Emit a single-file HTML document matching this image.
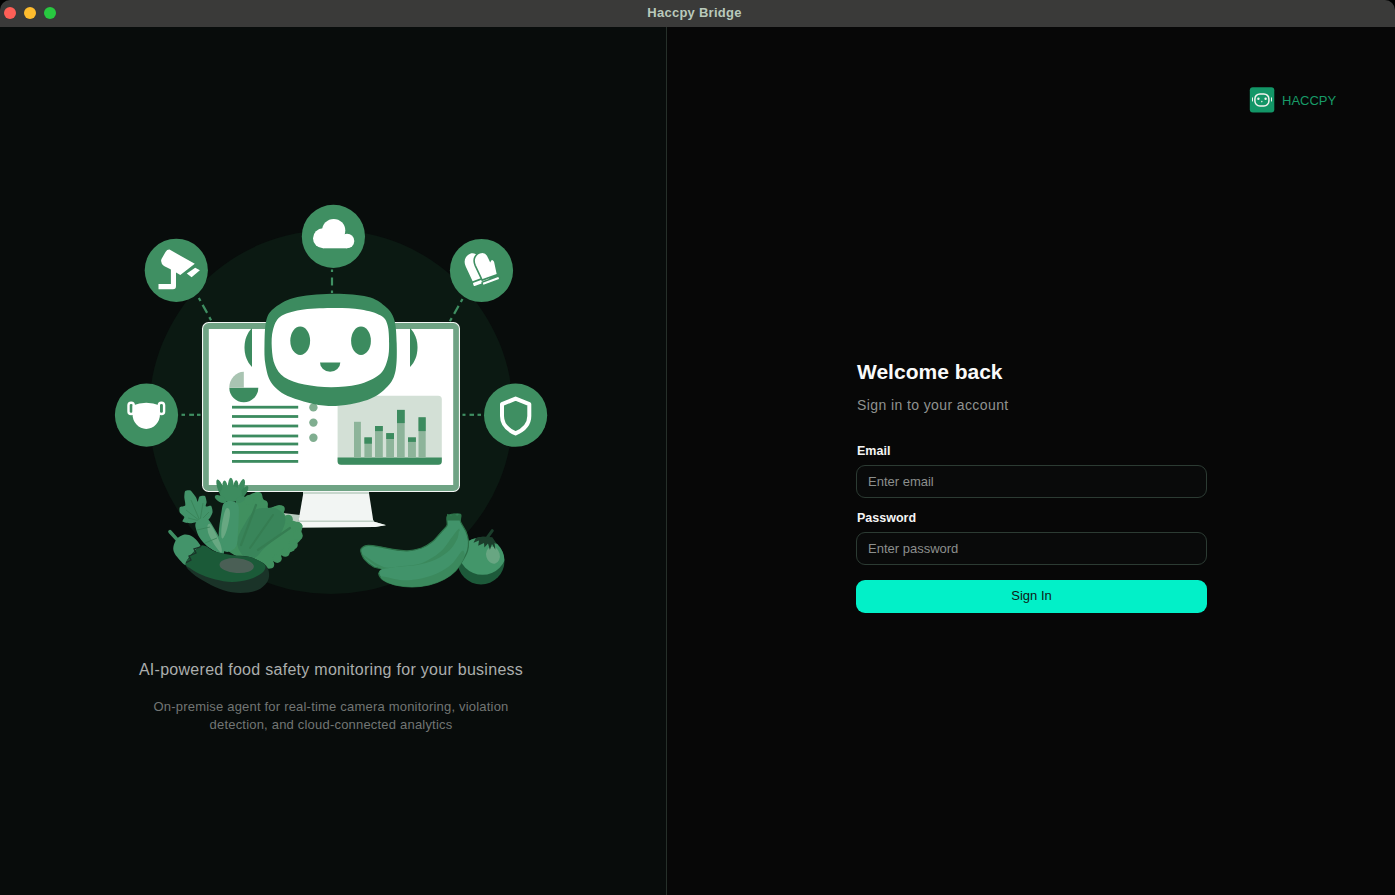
<!DOCTYPE html>
<html><head><meta charset="utf-8">
<style>
*{margin:0;padding:0;box-sizing:border-box}
html,body{width:1395px;height:895px;overflow:hidden;background:#000000;font-family:"Liberation Sans",sans-serif}
.titlebar{position:absolute;left:0;top:0;width:1395px;height:27px;background:#3a3a39;border-radius:10px 10px 0 0}
.tl{position:absolute;top:7px;width:12px;height:12px;border-radius:50%}
.ttl{position:absolute;left:-3px;width:1395px;top:5px;text-align:center;font-size:13px;font-weight:bold;color:#b9c9bb;letter-spacing:0.25px}
.left{position:absolute;left:0;top:27px;width:666px;height:868px;background:#080c0b}
.divider{position:absolute;left:666px;top:27px;width:1px;height:868px;background:#26302a}
.right{position:absolute;left:667px;top:27px;width:728px;height:868px;background:#070707}
.abs{position:absolute;white-space:nowrap}
.input{position:absolute;left:856px;width:351px;height:33px;border:1px solid #2c3b33;border-radius:9px;background:#090a0a}
.ph{position:absolute;left:11px;top:8px;font-size:13px;color:#8c8f8d}
</style></head><body>
<div class="titlebar">
  <div class="tl" style="left:4px;background:#fe5f57"></div>
  <div class="tl" style="left:24px;background:#febc2e"></div>
  <div class="tl" style="left:44px;background:#28c840"></div>
  <div class="ttl">Haccpy Bridge</div>
</div>
<div class="left"></div>
<div class="divider"></div>
<div class="right"></div>

<!-- ILLUSTRATION -->
<svg id="illu" class="abs" style="left:0;top:0" width="666" height="895" viewBox="0 0 666 895">
<circle cx="331" cy="412" r="182" fill="#0b1912"/>
<line x1="332.0" y1="269.5" x2="332.0" y2="272.0" stroke="#3f8f62" stroke-width="2.2"/>
<line x1="332.0" y1="277.5" x2="332.0" y2="285.5" stroke="#3f8f62" stroke-width="2.2"/>
<line x1="332.0" y1="290.5" x2="332.0" y2="293.0" stroke="#3f8f62" stroke-width="2.2"/>
<line x1="181.5" y1="414.8" x2="185.0" y2="414.8" stroke="#3f8f62" stroke-width="2.2"/>
<line x1="189.2" y1="414.8" x2="194.0" y2="414.8" stroke="#3f8f62" stroke-width="2.2"/>
<line x1="197.0" y1="414.8" x2="200.5" y2="414.8" stroke="#3f8f62" stroke-width="2.2"/>
<line x1="462.5" y1="414.8" x2="465.5" y2="414.8" stroke="#3f8f62" stroke-width="2.2"/>
<line x1="469.5" y1="414.8" x2="474.0" y2="414.8" stroke="#3f8f62" stroke-width="2.2"/>
<line x1="477.5" y1="414.8" x2="481.0" y2="414.8" stroke="#3f8f62" stroke-width="2.2"/>
<line x1="198.8" y1="298.0" x2="200.5" y2="301.0" stroke="#3f8f62" stroke-width="2.2"/>
<line x1="202.6" y1="304.9" x2="207.1" y2="312.9" stroke="#3f8f62" stroke-width="2.2"/>
<line x1="209.3" y1="317.1" x2="211.1" y2="320.3" stroke="#3f8f62" stroke-width="2.2"/>
<line x1="462.5" y1="299.0" x2="460.8" y2="302.0" stroke="#3f8f62" stroke-width="2.2"/>
<line x1="458.6" y1="305.9" x2="454.1" y2="313.9" stroke="#3f8f62" stroke-width="2.2"/>
<line x1="451.7" y1="318.1" x2="449.9" y2="321.3" stroke="#3f8f62" stroke-width="2.2"/>
<circle cx="176.3" cy="270.3" r="31.6" fill="#3f8f62"/>
<circle cx="333.4" cy="236.4" r="31.6" fill="#3f8f62"/>
<circle cx="481.5" cy="270.5" r="31.6" fill="#3f8f62"/>
<circle cx="146.5" cy="415.1" r="31.6" fill="#3f8f62"/>
<circle cx="515.6" cy="415.2" r="31.6" fill="#3f8f62"/>
<path d="M169.5,249.6L194.8,263.8L180.3,275L171,269.5L164,266Q160,263 161.5,259L165.5,252Q167,249.5 169.5,249.6Z" fill="#ffffff"/>
<path d="M170.9,268L176,271L176,286Q176,289.2 173,289.2L158.5,289.2L158.5,284.1L170.9,284.1Z" fill="#ffffff"/>
<path d="M186.8,273.6L195.2,267.8L199.9,270.3L191.6,277.2Z" fill="#ffffff"/>
<g fill="#ffffff"><circle cx="323" cy="238.3" r="10"/><circle cx="333.7" cy="230.5" r="11.6"/><circle cx="347" cy="241" r="7.3"/><rect x="323" y="236" width="24" height="12.3"/></g>
<g transform="translate(480,279.5) rotate(-20)"><path d="M-7.5,-1L-9,-17C-9.5,-24 -5,-27.5 -0.5,-27.5C4,-27.5 6.5,-24 6.5,-19.5L6.8,-16.5C8.5,-18 11.2,-17 10.7,-13.5L9,-1Z" fill="#ffffff"/><rect x="-8" y="0.9" width="17" height="3.4" rx="0.8" fill="#ffffff"/></g>
<g transform="translate(489.5,278.5) rotate(-20)"><path d="M-7.5,-1L-9,-17C-9.5,-24 -5,-27.5 -0.5,-27.5C4,-27.5 6.5,-24 6.5,-19.5L6.8,-16.5C8.5,-18 11.2,-17 10.7,-13.5L9,-1Z" fill="#ffffff" stroke="#3f8f62" stroke-width="1.6"/><rect x="-8.5" y="0.9" width="18" height="3.6" rx="0.8" fill="#ffffff" stroke="#3f8f62" stroke-width="1.4"/></g>
<path d="M132.5,405.5Q146.3,400 160,405.5L160,414A13.75,15 0 0 1 132.5,414Z" fill="#ffffff"/>
<rect x="128.5" y="402.7" width="5.3" height="11.3" rx="2.6" fill="none" stroke="#ffffff" stroke-width="2.4"/>
<rect x="158.8" y="402.7" width="5.3" height="11.3" rx="2.6" fill="none" stroke="#ffffff" stroke-width="2.4"/>
<path d="M515.6,398.6L502,404.2L502,416Q502,427.5 515.6,433.4Q529.3,427.5 529.3,416L529.3,404.2Z" fill="none" stroke="#ffffff" stroke-width="4" stroke-linejoin="round"/>
<path d="M283,513L300,515L298.4,521.5L373.4,521.5L386,525L375,527L300,527.5L290,524Z" fill="#b7cabd"/>
<path d="M303.5,492L368.8,492L373.4,521.5L298.4,521.5Z" fill="#f2f5f3"/>
<path d="M298.4,521.5L373.4,521.5L386,525.2L375,527L300,527.5Z" fill="#f4f7f5"/>
<rect x="303" y="492" width="66" height="2" fill="#c8d7cd"/>
<rect x="299" y="520.5" width="75" height="1.5" fill="#c0d1c5"/>
<rect x="202" y="322" width="258" height="170" rx="6.5" fill="#f4f7f5"/>
<rect x="203.1" y="323.1" width="255.8" height="167.8" rx="5.5" fill="#6fa384"/>
<rect x="208.8" y="329" width="244.4" height="156" fill="#ffffff"/>
<path d="M252,328C247,333 244.5,340 244.5,347.5C244.5,355 247,362 252,367Z" fill="#3c8b5f"/>
<path d="M410,328C415,333 417.5,340 417.5,347.5C417.5,355 415,362 410,367Z" fill="#3c8b5f"/>
<path d="M243.8,387.8L229.3,387.8A14.5,14.5 0 0 0 258.3,387.8Z" fill="#3c8b5f"/>
<path d="M243.8,387.8L229.3,387.8A14.5,16 0 0 1 243.8,371.8Z" fill="#a9c4b2"/>
<rect x="232" y="405.8" width="66.2" height="2.8" fill="#3c8b5f"/>
<rect x="232" y="415.1" width="66.2" height="2.8" fill="#3c8b5f"/>
<rect x="232" y="424.6" width="66.2" height="2.8" fill="#3c8b5f"/>
<rect x="232" y="434.6" width="66.2" height="2.8" fill="#3c8b5f"/>
<rect x="232" y="442.6" width="66.2" height="2.8" fill="#3c8b5f"/>
<rect x="232" y="451.0" width="66.2" height="2.8" fill="#3c8b5f"/>
<rect x="232" y="460.0" width="66.2" height="2.8" fill="#3c8b5f"/>
<circle cx="313.4" cy="407.4" r="4.2" fill="#80ae90"/>
<circle cx="313.4" cy="422.6" r="4.2" fill="#80ae90"/>
<circle cx="313.4" cy="437.7" r="4.2" fill="#80ae90"/>
<rect x="337.6" y="395.8" width="104.2" height="68.9" rx="3.5" fill="#d3e0d6"/>
<path d="M337.6,457.5H441.8V461.2A3.5,3.5 0 0 1 438.3,464.7H341.1A3.5,3.5 0 0 1 337.6,461.2Z" fill="#3c8b5f"/>
<rect x="354" y="421.8" width="6.9" height="35.7" fill="#8db49a"/>
<rect x="364.4" y="437.4" width="7.5" height="20.1" fill="#8db49a"/>
<rect x="364.4" y="437.4" width="7.5" height="6.3" fill="#3c8b5f"/>
<rect x="375" y="426" width="7.8" height="31.5" fill="#8db49a"/>
<rect x="375" y="426" width="7.8" height="5.1" fill="#3c8b5f"/>
<rect x="386.2" y="433.1" width="7.8" height="24.4" fill="#8db49a"/>
<rect x="386.2" y="433.1" width="7.8" height="5.9" fill="#3c8b5f"/>
<rect x="397" y="409.9" width="7.7" height="47.6" fill="#8db49a"/>
<rect x="397" y="409.9" width="7.7" height="13.2" fill="#3c8b5f"/>
<rect x="408" y="437.4" width="7.9" height="20.1" fill="#8db49a"/>
<rect x="408" y="437.4" width="7.9" height="4.5" fill="#3c8b5f"/>
<rect x="418.5" y="417.3" width="7.2" height="40.2" fill="#8db49a"/>
<rect x="418.5" y="417.3" width="7.2" height="13.8" fill="#3c8b5f"/>
<path d="M331.2,293.8C343.5,293.5 358.5,294.6 367.4,296.7C376.4,298.8 380.4,302.3 384.8,306.1C389.3,309.9 392.3,313.2 394.2,319.5C396.2,325.8 396.4,335.2 396.7,343.6C396.9,352.1 397.1,363.3 395.6,370.5C394.1,377.6 392.2,381.6 387.5,386.6C382.8,391.5 377.2,396.7 367.4,400C357.6,403.2 341.3,406.5 328.5,406C315.8,405.6 300.4,401 291,397.3C281.6,393.6 276.4,389.2 272.2,383.9C267.9,378.5 266.8,371.8 265.5,365.1C264.2,358.4 264.4,351 264.5,343.6C264.7,336.3 264.7,326.7 266.2,320.8C267.7,315 268.9,312.6 273.5,308.8C278.1,305 284,300.6 293.6,298C303.3,295.5 318.9,294 331.2,293.8Z" fill="#3c8b5f"/>
<path d="M331.2,308.1C341.3,308 352.4,308.2 360.7,309.4C369,310.7 376.4,312.9 380.8,315.5C385.3,318.1 386.1,320.2 387.5,324.9C388.9,329.6 389.1,337.8 389.1,343.6C389.1,349.5 389.1,354.6 387.5,359.7C385.9,364.9 384.4,370.4 379.5,374.5C374.6,378.6 366.1,382.4 358,384.6C350,386.7 340.1,387.2 331.2,387.2C322.3,387.2 312.2,386.2 304.4,384.6C296.6,382.9 289.2,380.4 284.3,377.2C279.3,373.9 277,370 274.9,365.1C272.8,360.2 272.1,353.5 271.8,347.7C271.5,341.9 271.5,335.4 272.9,330.2C274.3,325.1 275.7,320.2 280.2,316.8C284.8,313.5 291.9,311.6 300.4,310.1C308.8,308.7 321.1,308.2 331.2,308.1Z" fill="#ffffff"/>
<ellipse cx="300.2" cy="340.8" rx="9.9" ry="14.2" fill="#3c8b5f"/>
<ellipse cx="361" cy="340.8" rx="9.9" ry="14.2" fill="#3c8b5f"/>
<path d="M320,362.4L340.3,362.4A10.15,9.4 0 0 1 320,362.4Z" fill="#3c8b5f"/>
<path d="M244.1,498.1C245.7,497.3 247.6,495.8 249.1,495.1C250.6,494.3 253.5,492.8 255.2,492.5C256.8,492.3 260.1,492.2 261.2,493C262.3,493.9 262.4,497.7 263.2,499.1C264,500.4 266.5,501.9 267.2,503.1C267.9,504.3 267.4,507.6 268.2,508.1C269,508.7 271.8,507.5 273.2,507.1C274.7,506.7 277.9,505.1 279.3,505.1C280.6,505.1 282.6,505.9 283.3,507.1C284,508.3 283.5,512.5 284.3,514.1C285.1,515.8 287.6,518.1 289.3,519.2C291.1,520.2 295.6,521.4 297.4,522.2C299.1,523 301.9,523.9 302.4,525.2C302.9,526.5 301.4,530.6 301.4,532.2C301.4,533.8 302.8,535.9 302.4,537.3C302,538.6 299.4,541.2 298.4,542.3C297.3,543.4 294.9,544.2 294.3,545.3C293.8,546.4 295.3,549.3 294.3,550.3C293.4,551.4 289.1,552.7 287.3,553.3C285.6,554 282.4,554.4 281.3,555.4C280.2,556.3 280.3,559.6 279.3,560.4C278.2,561.2 274.2,560.7 273.2,561.4C272.3,562.1 272.9,564.5 272.2,565.4C271.6,566.3 270.5,569 268.2,568.4C265.9,567.9 259.6,563.1 255.2,561.4C250.7,559.6 239.1,557.5 235.1,555.4C231,553.2 225.9,550.7 225,545.3C224.1,539.9 226.4,521 228,515.2C229.6,509.3 234.9,503.4 237.1,501.1C239.2,498.8 242.5,498.9 244.1,498.1Z" fill="#40905f"/>
<circle cx="249.1" cy="500.1" r="5" fill="#40905f"/>
<circle cx="257.5" cy="496.5" r="4.5" fill="#40905f"/>
<circle cx="264" cy="504" r="3.8" fill="#40905f"/>
<circle cx="275.3" cy="510.5" r="4" fill="#40905f"/>
<circle cx="281.3" cy="509.1" r="3.5" fill="#40905f"/>
<circle cx="288.3" cy="519.2" r="4.5" fill="#40905f"/>
<circle cx="297.4" cy="526.7" r="5" fill="#40905f"/>
<circle cx="297.8" cy="535.3" r="4.8" fill="#40905f"/>
<circle cx="293.3" cy="544.8" r="4.5" fill="#40905f"/>
<circle cx="285.3" cy="552.3" r="4.5" fill="#40905f"/>
<circle cx="277.3" cy="558.4" r="4.5" fill="#40905f"/>
<circle cx="270.2" cy="564.4" r="4" fill="#40905f"/>
<path d="M237.1,541.3C237.4,535.9 242.1,528.4 245.1,523.2C248.1,518 251.5,512.6 255.2,510.1C258.8,507.6 263.5,508.3 267.2,508.1C270.9,507.9 274.2,507.4 277.3,509.1C280.3,510.8 284.6,514.3 285.3,518.2C286,522 283.5,528.4 281.3,532.2C279.1,536.1 275.3,538.4 272.2,541.3C269.2,544.1 266,546.6 263.2,549.3C260.3,552 258.5,556.4 255.2,557.4C251.8,558.4 246.1,558 243.1,555.4C240.1,552.7 236.7,546.6 237.1,541.3Z" fill="#39855a"/>
<path d="M241,545L256,505" stroke="#357d52" stroke-width="2.2" fill="none" stroke-linecap="round"/>
<path d="M258,550L290,528" stroke="#357d52" stroke-width="2.2" fill="none" stroke-linecap="round"/>
<path d="M250,548L273,515" stroke="#357d52" stroke-width="2" fill="none" stroke-linecap="round"/>
<ellipse cx="221.1" cy="489.8" rx="11.0" ry="3.0" transform="rotate(-110.8 221.1 489.8)" fill="#378458"/>
<ellipse cx="225.2" cy="489.2" rx="8.8" ry="2.8" transform="rotate(-95.5 225.2 489.2)" fill="#3d8c5f"/>
<ellipse cx="230.8" cy="487.9" rx="10.1" ry="3.0" transform="rotate(-90.0 230.8 487.9)" fill="#3d8c5f"/>
<ellipse cx="235.7" cy="489.1" rx="8.9" ry="2.8" transform="rotate(-85.8 235.7 489.1)" fill="#378458"/>
<ellipse cx="240.9" cy="488.6" rx="9.9" ry="3.0" transform="rotate(-72.6 240.9 488.6)" fill="#3d8c5f"/>
<ellipse cx="243.4" cy="492.6" rx="7.8" ry="2.8" transform="rotate(-55.5 243.4 492.6)" fill="#378458"/>
<ellipse cx="231" cy="494" rx="11" ry="8" fill="#3d8c5f"/>
<ellipse cx="220.5" cy="499.0" rx="6.3" ry="3.0" transform="rotate(-151.4 220.5 499.0)" fill="#3d8c5f"/>
<ellipse cx="240.5" cy="499.5" rx="5.1" ry="3.0" transform="rotate(-29.1 240.5 499.5)" fill="#3d8c5f"/>
<path d="M223.6,503.6C225.3,501.2 228.4,500.8 230.8,500.9C233.2,501.1 236.6,502.1 237.9,504.5C239.3,506.9 238.8,510.5 238.8,515.2C238.8,520 238.4,527.9 237.9,533.1C237.5,538.3 237.9,543.4 236.1,546.5C234.4,549.6 229.9,551.9 227.2,551.9C224.5,551.9 221.5,549.6 220.1,546.5C218.6,543.4 218.6,538.3 218.7,533.1C218.9,527.9 220.1,520.1 220.9,515.2C221.8,510.3 222,506 223.6,503.6Z" fill="#43946a"/>
<path d="M225.4,509.9C226.6,507.2 228.2,508.1 229,509C229.7,509.9 230.2,511.9 229.9,515.2C229.6,518.5 228.2,524.9 227.2,528.6C226.2,532.4 224.6,536.2 223.6,537.6C222.7,538.9 221.7,538.8 221.4,536.7C221.1,534.6 221.2,529.5 221.8,525.1C222.5,520.6 224.2,512.5 225.4,509.9Z" fill="#68a882"/>
<path d="M199.5,521.5C197.4,521.9 192.5,523.3 190.6,523.3C188.6,523.3 183.2,522.2 182.5,521.5C181.8,520.8 184.6,518.1 184.3,517C184,516 180.4,513.7 179.8,512.5C179.3,511.4 179.2,508 179.8,507.2C180.5,506.3 184.7,506.5 185.2,505.4C185.7,504.2 184.3,499 184.3,497.3C184.3,495.7 184.5,491.9 185.2,491.1C185.9,490.3 189.3,489.9 190.6,490.6C191.8,491.4 195.1,496 195.9,497.3C196.8,498.6 197.3,501.9 197.7,501.8C198.1,501.7 198.7,497.1 199.5,496.5C200.3,495.8 204,495.4 204.9,496C205.7,496.6 206.5,500.6 206.6,501.8C206.8,503 205.2,505.8 205.8,506.3C206.3,506.8 210.3,505.1 211.1,505.8C211.9,506.6 212.8,510.9 212.5,512.5C212.1,514.2 209.9,518.6 208.4,519.7C206.9,520.7 201.6,521.1 199.5,521.5Z" fill="#43946a"/>
<path d="M200,521L191,500M200,521L186,510M200,521L203,503M200,521L209,512M200,521L188,518" stroke="#378257" stroke-width="0.8" fill="none"/>
<path d="M195.9,522.4C197,520.6 200.1,518.4 202.2,517.9C204.3,517.5 206.1,517.3 208.4,519.7C210.8,522.1 213.9,527.7 216.5,532.2C219,536.7 222.4,542.9 223.6,546.5C224.8,550.1 224.2,552.5 223.6,553.7C223,554.9 222.7,554.9 220.1,553.7C217.4,552.5 211,549.2 207.5,546.5C204.1,543.8 201.4,540.5 199.5,537.6C197.6,534.6 196.5,531.2 195.9,528.6C195.3,526.1 194.9,524.2 195.9,522.4Z" fill="#43946a"/>
<path d="M207.5,525.9C207.8,524.2 209,522.2 211.1,525.1C213.2,527.9 218.3,538.5 220.1,542.9C221.8,547.4 222.1,550.7 221.8,551.9C221.5,553.1 220.4,552.8 218.3,550.1C216.2,547.4 211.1,539.8 209.3,535.8C207.5,531.8 207.2,527.7 207.5,525.9Z" fill="#68a882"/>
<path d="M197,530L210,527M205,543L217,538" stroke="#378257" stroke-width="0.8" fill="none"/>
<path d="M170,531.7L177.6,540.1" stroke="#3f8e63" stroke-width="3.6" stroke-linecap="round"/>
<path d="M173.4,546.8C173.8,544.5 174.9,541.3 176.7,539.2C178.5,537.2 181.6,535.1 184.3,534.6C186.9,534.2 190,535 192.6,536.7C195.3,538.5 199.2,542.9 200.2,545.1C201.2,547.3 200.2,547.9 198.5,550.1C196.8,552.4 192.2,556 190.1,558.5C188,561 187.9,565.2 185.9,565.2C184,565.2 180.4,560.6 178.4,558.5C176.4,556.4 175.1,554.6 174.2,552.6C173.4,550.7 173,549 173.4,546.8Z" fill="#43946a"/>
<path d="M185.9,562.7C187.3,558.1 196.1,547.8 201,545.9C205.9,544.1 210.1,550.3 215.3,551.8C220.4,553.3 226.4,554.3 232,555.2C237.6,556 243.5,555.4 248.8,556.8C254.1,558.2 260.5,561 263.9,563.5C267.2,566.1 268.3,568.8 268.9,571.9C269.4,575 269.2,578.9 267.2,582C265.3,585 261.6,588.5 257.2,590.3C252.7,592.2 246,592.9 240.4,592.9C234.8,592.9 229.2,592 223.6,590.3C218.1,588.7 212.1,585.6 206.9,582.8C201.7,580 196.1,576.9 192.6,573.6C189.2,570.2 184.5,567.3 185.9,562.7Z" fill="#1a3328"/>
<path d="M185.9,562.7C187.5,558.8 196.1,547.8 201,545.9C205.9,544.1 210.1,550.3 215.3,551.8C220.4,553.3 226.4,554.3 232,555.2C237.6,556 243.9,555.7 248.8,556.8C253.7,558 258.6,560.2 261.3,561.9C264.1,563.5 265.5,564.9 265.5,566.9C265.5,568.8 264.1,571.5 261.3,573.6C258.6,575.7 253.7,578.1 248.8,579.5C243.9,580.9 237.6,582 232,582C226.4,582 220.2,580.6 215.3,579.5C210.4,578.3 206.6,576.9 202.7,575.3C198.8,573.6 194.6,571.5 191.8,569.4C189,567.3 184.4,566.6 185.9,562.7Z" fill="#1b5a38"/>
<path d="M186,562.7L191,560L189,556L196,553L194,549L200,547L201,546" stroke="#1a3328" stroke-width="1.3" fill="none"/>
<ellipse cx="236.7" cy="565.6" rx="17.2" ry="7.4" transform="rotate(4 236.7 565.6)" fill="#4a5f55"/>
<circle cx="481" cy="561" r="23.5" fill="#1d5a3a"/>
<clipPath id="tomclip"><circle cx="481" cy="561" r="23.5"/></clipPath>
<circle cx="482.5" cy="550.5" r="24.3" fill="#43966a" clip-path="url(#tomclip)"/>
<ellipse cx="493" cy="555.2" rx="6.8" ry="8.6" transform="rotate(-15 493 555.2)" fill="#68a682"/>
<path d="M473.5,542.7L479,540.5L478.2,545.8L484,543L484.4,547.4L488,543.5L489.9,549.7L492,544L495.4,549.7L494.5,543L497,544.3L492.3,537.2L482.9,536.4L475.8,538Z" fill="#1b3d2b"/>
<path d="M487.6,537.2L492.3,530.6" stroke="#1b3d2b" stroke-width="3" stroke-linecap="round"/>
<path d="M360.7,549.9C360.9,548 364,546 366.4,545.6C368.8,545.2 375.2,546 378.7,546.6C382.3,547.1 389.2,548.8 393,549.4C396.8,550 403.4,551 407.2,550.8C411,550.6 418,549.2 421.5,548C424.9,546.7 430.1,543.6 432.9,541.3C435.6,539.1 440.4,533 442.3,530.9C444.2,528.7 446.4,527.2 447.1,525.2C447.8,523.2 445.8,517.2 447.6,515.7C449.3,514.2 458.7,513.5 460.4,514.3C462.1,515 459.6,519.1 460.4,521.4C461.1,523.7 465,529.2 466.1,531.8C467.2,534.5 468.3,538.8 468.5,541.3C468.6,543.9 468.3,548.2 467.5,550.8C466.7,553.5 463.9,558.6 462.3,561.3C460.7,563.9 458,568.4 455.6,570.8C453.2,573.2 447.8,577.4 444.2,579.3C440.7,581.2 433.4,584 429.1,585C424.7,586 416.5,586.9 412,586.9C407.4,586.9 398.7,585.9 394.9,585C391.1,584.1 385.6,581.8 383.5,580.3C381.3,578.7 379,575.1 378.7,573.6C378.5,572.1 382.2,569.7 381.6,568.9C381,568 376.3,568.2 374,567C371.7,565.7 366.3,561.6 364.5,559.4C362.7,557.1 360.4,551.7 360.7,549.9Z" fill="#41936a" stroke="#2c7148" stroke-width="1.2"/>
<path d="M362.6,554.6C365,555.6 376.8,565.1 383.5,567C390.1,568.9 396.1,566.6 402.5,566C408.8,565.4 415.1,565.5 421.5,563.2C427.8,560.8 435.1,556.5 440.4,551.8C445.8,547 450.6,538.5 453.7,534.7C456.9,530.9 458.8,528 459.4,529C460.1,529.9 459.1,536.3 457.5,540.4C456,544.5 453.6,549.9 449.9,553.7C446.3,557.5 441.2,560.6 435.7,563.2C430.2,565.7 423,567.6 416.7,568.9C410.4,570.1 403.6,570.8 397.7,570.8C391.9,570.8 386.3,570.4 381.6,568.9C376.8,567.3 372.4,563.6 369.2,561.3C366.1,558.9 360.2,553.7 362.6,554.6Z" fill="#3b895d"/>
<path d="M379.7,570.8C381,568.9 386.8,568.4 393,567.4C399.1,566.5 409.6,566.4 416.7,565.1C423.8,563.7 430.2,561.9 435.7,559.4C441.2,556.8 446.3,553.4 449.9,549.9C453.6,546.4 456,541.6 457.5,538.5C459.1,535.3 458.3,530.4 459.4,530.9C460.5,531.4 463.9,537.2 464.2,541.3C464.5,545.4 463.4,551.3 461.3,555.6C459.3,559.8 455.6,563.6 451.8,567C448,570.3 443.6,573.3 438.5,575.5C433.5,577.7 427.5,579.1 421.5,580.3C415.4,581.4 408.5,582.5 402.5,582.2C396.5,581.8 389.2,580.3 385.4,578.4C381.6,576.5 378.4,572.6 379.7,570.8Z" fill="#41936a"/>
<path d="M382.5,576.5C385.7,576.5 396,579.9 402.5,580.3C409,580.6 415.4,579.6 421.5,578.4C427.5,577.1 433.5,575 438.5,572.7C443.6,570.3 447.9,567.8 451.8,564.1C455.8,560.5 460.2,551.9 462.3,550.8C464.3,549.7 465.3,554.1 464.2,557.5C463.1,560.8 459,567.1 455.6,570.8C452.3,574.4 448.7,576.9 444.2,579.3C439.8,581.7 434.4,583.7 429.1,585C423.7,586.3 417.7,586.9 412,586.9C406.3,586.9 399.6,586.1 394.9,585C390.1,583.9 385.5,581.7 383.5,580.3C381.4,578.8 379.4,576.5 382.5,576.5Z" fill="#3b895d"/>
<path d="M447.1,513.8L451,515.5L454,513.6L457,515.5L460.9,513.8L460.9,520.4L447.1,520.4Z" fill="#2c7148"/>
</svg>

<div class="abs" style="left:-2px;width:666px;top:661px;text-align:center;font-size:16px;letter-spacing:0.28px;color:#abaead">AI-powered food safety monitoring for your business</div>
<div class="abs" style="left:-2px;width:666px;top:697.5px;text-align:center;font-size:13px;line-height:18.4px;letter-spacing:0.2px;color:#727674">On-premise agent for real-time camera monitoring, violation<br>detection, and cloud-connected analytics</div>

<!-- LOGO -->
<svg class="abs" style="left:1249px;top:87px" width="26" height="26" viewBox="0 0 26 26">
  <rect x="0.8" y="0.2" width="24.5" height="25.4" rx="3" fill="#139667"/>
  <rect x="5.9" y="6.9" width="14" height="12" rx="5" fill="none" stroke="#f2f2ee" stroke-width="1.5"/>
  <circle cx="9.4" cy="11.7" r="1.2" fill="#f2f2ee"/><circle cx="16.6" cy="11.7" r="1.2" fill="#f2f2ee"/><circle cx="12.8" cy="14.6" r="0.8" fill="#d8e6dc"/>
  <rect x="3" y="10.2" width="1" height="4.3" rx="0.5" fill="#f2f2ee"/><rect x="22" y="10.2" width="1" height="4.3" rx="0.5" fill="#f2f2ee"/>
</svg>
<div class="abs" style="left:1282px;top:93px;font-size:13px;color:#189b68">HACCPY</div>

<!-- FORM -->
<div class="abs" style="left:857px;top:360px;font-size:21px;font-weight:bold;color:#fafafa">Welcome back</div>
<div class="abs" style="left:857px;top:397px;font-size:14px;letter-spacing:0.4px;color:#8f9290">Sign in to your account</div>
<div class="abs" style="left:857px;top:444px;font-size:12.5px;font-weight:bold;color:#f4f4f4">Email</div>
<div class="input" style="top:465px"><div class="ph">Enter email</div></div>
<div class="abs" style="left:857px;top:511px;font-size:12.5px;font-weight:bold;color:#f4f4f4">Password</div>
<div class="input" style="top:532px"><div class="ph">Enter password</div></div>
<div class="abs" style="left:856px;top:580px;width:351px;height:33px;border-radius:9px;background:#02f0c8;text-align:center;font-size:13px;line-height:31px;color:#101a16">Sign In</div>
</body></html>
